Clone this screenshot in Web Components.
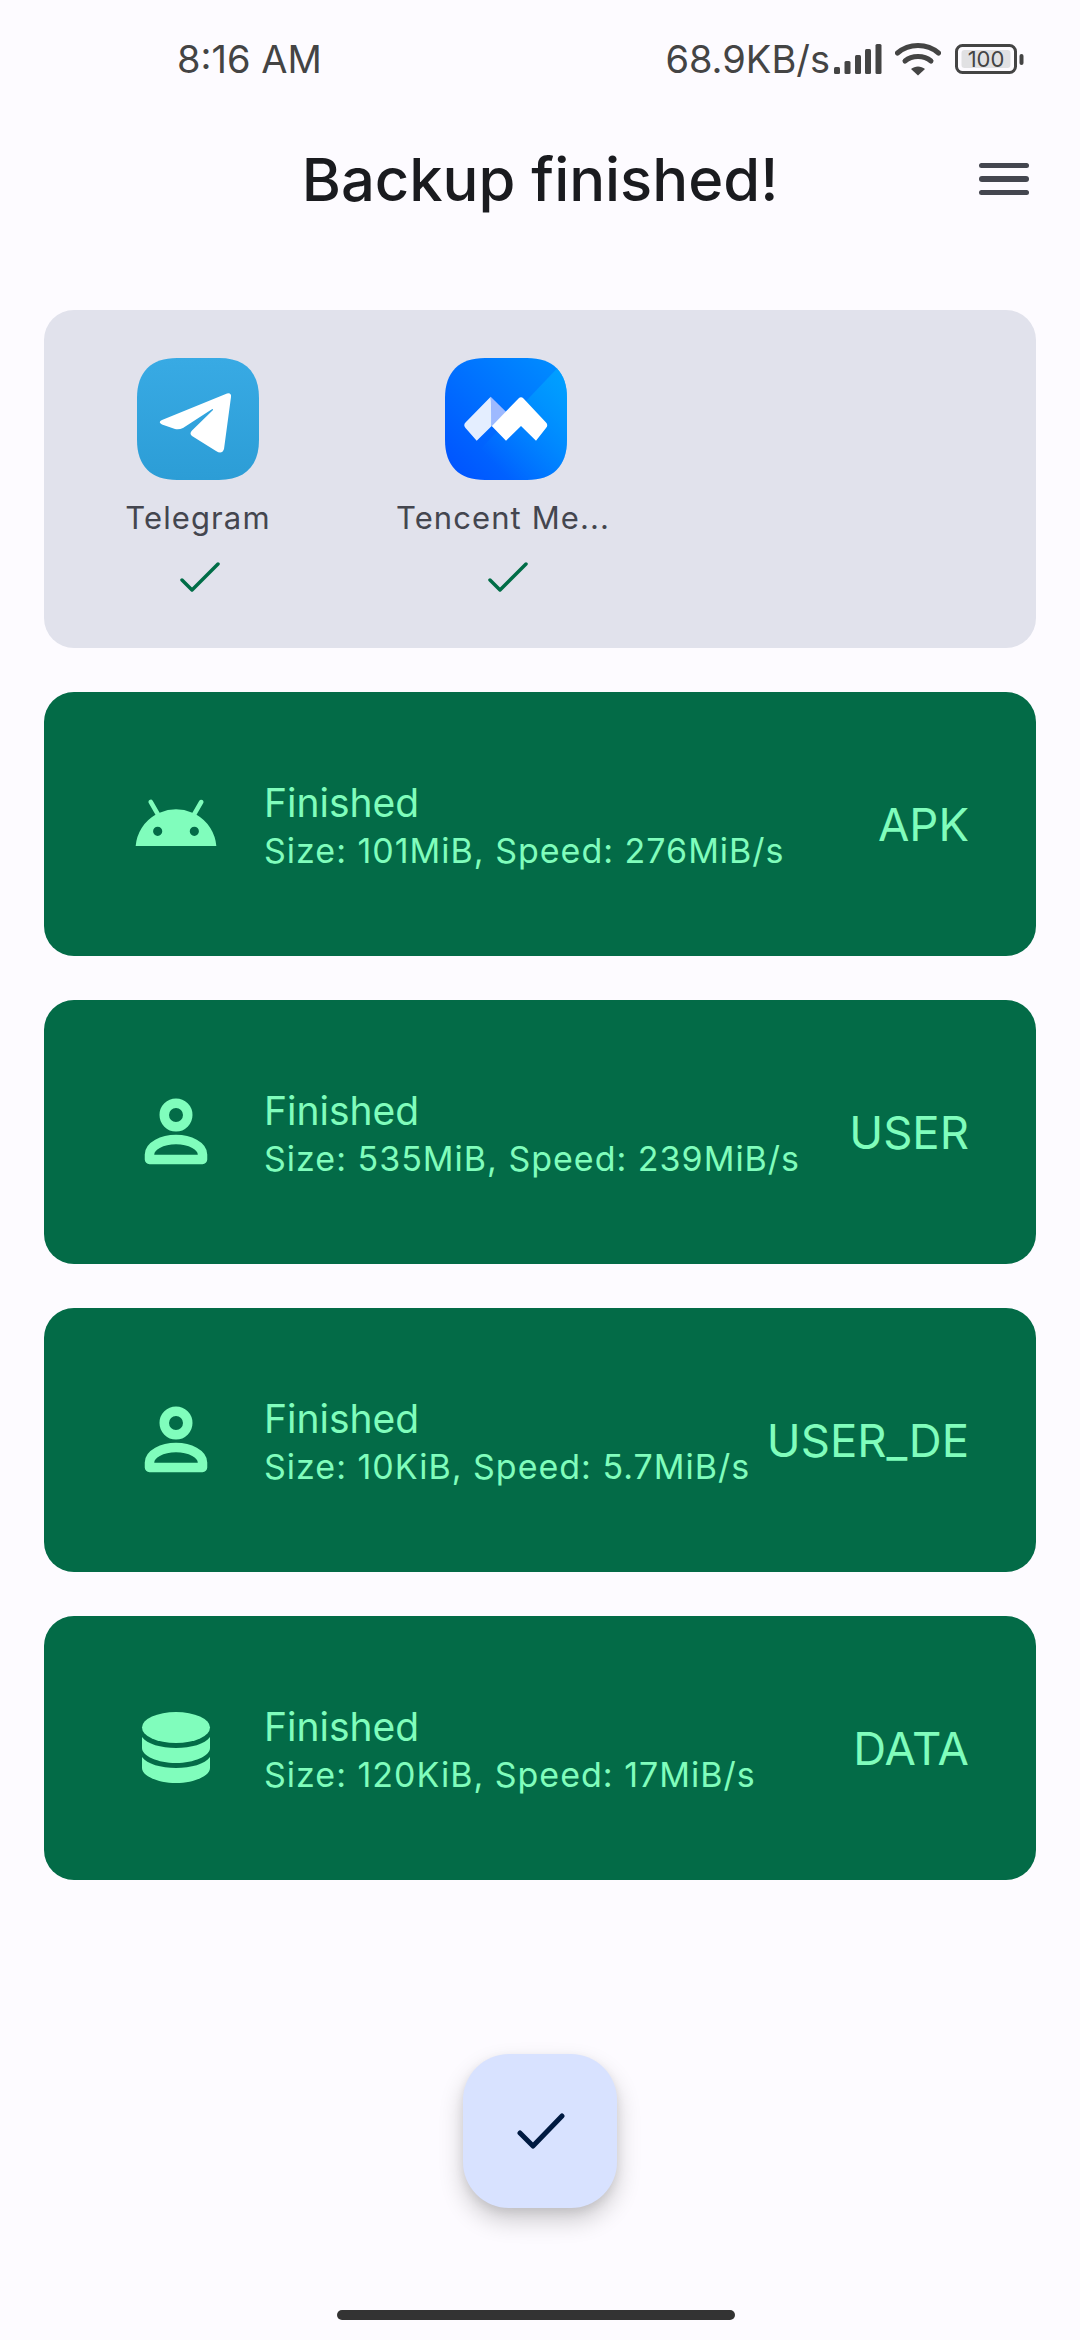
<!DOCTYPE html>
<html>
<head>
<meta charset="utf-8">
<style>
  html, body { margin: 0; padding: 0; background: #fdfbff; }
  body { font-family: Inter, Roboto, sans-serif; }
</style>
</head>
<body>
<app-screen>
  <status-bar></status-bar>
  <top-bar>Backup finished!</top-bar>
  <apps-card>
    <app-tile name="Telegram">
      <svg slot="icon" width="122" height="122" viewBox="0 0 122 122">
        <defs><linearGradient id="tg" x1="0" y1="0" x2="0" y2="1"><stop offset="0" stop-color="#38aae4"/><stop offset="1" stop-color="#2c9dd6"/></linearGradient></defs>
        <path d="M40 0H82C108 0 122 14 122 40V82C122 108 108 122 82 122H40C14 122 0 108 0 82V40C0 14 14 0 40 0Z" fill="url(#tg)"/>
        <path d="M90 35.500Q94.500 34.500 94 39L87 91Q85 97 79 93L55 78Q52 75.500 55 72.500L76 52Q76.500 50.500 74.500 51.500L46 70Q42 72 38 71L25 66.500Q20.500 64 25 62Z" fill="#fff"/>
      </svg>
    </app-tile>
    <app-tile name="Tencent Me..." shift>
      <svg slot="icon" width="122" height="122" viewBox="0 0 122 122">
        <defs>
          <linearGradient id="tm1" x1="0" y1="1" x2="1" y2="0"><stop offset="0" stop-color="#0050ff"/><stop offset="1" stop-color="#0090ff"/></linearGradient>
          <linearGradient id="tm2" x1="0" y1="1" x2="1" y2="0"><stop offset=".25" stop-color="#00a8ff" stop-opacity="0"/><stop offset="1" stop-color="#00a8ff" stop-opacity=".8"/></linearGradient>
          <clipPath id="tmc"><path d="M40 0H82C108 0 122 14 122 40V82C122 108 108 122 82 122H40C14 122 0 108 0 82V40C0 14 14 0 40 0Z"/></clipPath>
        </defs>
        <g clip-path="url(#tmc)">
          <rect width="122" height="122" fill="url(#tm1)"/>
          <path d="M122 0V122H6Z" fill="url(#tm2)"/>
        </g>
        <path d="M45.700 38.700L20.500 64.500Q18 67 20.500 70L31.700 82.700L46.700 68V53Z" fill="#e4eeff"/>
        <path d="M45.700 38.700L61 53.700L46.700 68Z" fill="#9db9ff"/>
        <path d="M73.500 40.500Q76 38 78.500 40.500L101 64.500Q103.500 67 101 70L91 82.700L76 68L61 82.700L46.700 68Z" fill="#fff"/>
      </svg>
    </app-tile>
  </apps-card>

  <task-card label="APK" status="Finished" detail="Size: 101MiB, Speed: 276MiB/s">
    <svg slot="icon" width="88" height="88" viewBox="0 0 24 24" fill="currentColor"><path d="M17.6 9.48l1.84-3.18c.16-.31.04-.69-.26-.85a.637.637 0 0 0-.83.22l-1.88 3.24a11.463 11.463 0 0 0-8.94 0L5.65 5.67a.643.643 0 0 0-.87-.2c-.28.18-.37.54-.22.83L6.4 9.48A10.78 10.78 0 0 0 1 18h22a10.78 10.78 0 0 0-5.4-8.52zM7 15.25a1.25 1.25 0 1 1 0-2.5 1.25 1.25 0 0 1 0 2.5zm10 0a1.25 1.25 0 1 1 0-2.5 1.25 1.25 0 0 1 0 2.5z"/></svg>
  </task-card>
  <task-card label="USER" status="Finished" detail="Size: 535MiB, Speed: 239MiB/s">
    <svg slot="icon" width="88" height="88" viewBox="0 0 88 88" fill="none" stroke="currentColor" stroke-width="9.500" stroke-linejoin="round"><circle cx="44" cy="27" r="11.750"/><path d="M17.500 71.500H70.500V66.500C70.500 58 58 51.500 44 51.500C30 51.500 17.500 58 17.500 66.500Z"/></svg>
  </task-card>
  <task-card label="USER_DE" status="Finished" detail="Size: 10KiB, Speed: 5.7MiB/s">
    <svg slot="icon" width="88" height="88" viewBox="0 0 88 88" fill="none" stroke="currentColor" stroke-width="9.500" stroke-linejoin="round"><circle cx="44" cy="27" r="11.750"/><path d="M17.500 71.500H70.500V66.500C70.500 58 58 51.500 44 51.500C30 51.500 17.500 58 17.500 66.500Z"/></svg>
  </task-card>
  <task-card label="DATA" status="Finished" detail="Size: 120KiB, Speed: 17MiB/s">
    <svg slot="icon" width="88" height="88" viewBox="0 0 88 88" fill="currentColor"><ellipse cx="44" cy="23.500" rx="34" ry="15.500"/><path d="M10 33C15 40 29 44 44 44C59 44 73 40 78 33V44C78 52 62 59 44 59C26 59 10 52 10 44Z"/><path d="M10 53C15 60 29 64 44 64C59 64 73 60 78 53V64C78 72 62 79 44 79C26 79 10 72 10 64Z"/></svg>
  </task-card>

  <fab-button></fab-button>
  <home-indicator></home-indicator>
</app-screen>

<script>
class AppScreen extends HTMLElement {
  constructor() {
    super();
    this.attachShadow({ mode: 'open' }).innerHTML = `
      <style>
        :host { display: flex; flex-direction: column; width: 1080px; height: 2340px; background: #fdfbff; overflow: hidden; }
        .list { display: flex; flex-direction: column; gap: 44px; padding: 0 44px; }
      </style>
      <slot name="top"></slot>
      <div class="list"><slot></slot></div>
      <slot name="bottom"></slot>`;
    this.querySelector('status-bar').slot = 'top';
    this.querySelector('top-bar').slot = 'top';
    this.querySelector('fab-button').slot = 'bottom';
    this.querySelector('home-indicator').slot = 'bottom';
  }
}

class StatusBar extends HTMLElement {
  constructor() {
    super();
    this.attachShadow({ mode: 'open' }).innerHTML = `
      <style>
        :host { display: flex; align-items: center; height: 118px; padding: 0 56px 0 177px; box-sizing: border-box; color: #444; font: 400 38px Inter, Roboto, sans-serif; }
        .right { margin-left: auto; display: flex; align-items: center; }
        .net { margin-right: 4px; }
        .signal { margin-right: 13px; }
        .wifi { margin-right: 14px; }
        .batt { position: relative; width: 69px; height: 30px; }
        .batt svg { display: block; }
        .batt span { position: absolute; left: 0; width: 62px; top: 0; line-height: 30px; text-align: center; font-size: 22px; }
      </style>
      <span>8:16 AM</span>
      <div class="right">
        <span class="net">68.9KB/s</span>
        <svg class="signal" width="48" height="30" viewBox="0 0 48 30" fill="#444">
          <rect x="0" y="23" width="6" height="7" rx="1.500"/><rect x="10.500" y="17" width="6" height="13" rx="1.500"/><rect x="21" y="11" width="6" height="19" rx="1.500"/><rect x="31" y="5" width="6" height="25" rx="1.500"/><rect x="41.500" y="0" width="6" height="30" rx="1.500"/>
        </svg>
        <svg class="wifi" width="46" height="34" viewBox="0 0 46 34" fill="none" stroke="#444" stroke-width="5" stroke-linecap="round">
          <path d="M2.500 11C14 1 32 1 43.500 11"/><path d="M10 19C17 13 29 13 36 19"/>
          <path d="M23 33.500L16 27C20 23.500 26 23.500 30 27Z" fill="#444" stroke="none"/>
        </svg>
        <div class="batt">
          <svg width="69" height="30" viewBox="0 0 69 30">
            <rect x="1.500" y="1.500" width="59" height="27" rx="6" fill="none" stroke="#444" stroke-width="3"/>
            <rect x="6.500" y="6" width="49" height="18" rx="3" fill="#e1e1e3"/>
            <rect x="64.500" y="10" width="4" height="11" rx="2" fill="#444"/>
          </svg>
          <span>100</span>
        </div>
      </div>`;
  }
}

class TopBar extends HTMLElement {
  constructor() {
    super();
    this.attachShadow({ mode: 'open' }).innerHTML = `
      <style>
        :host { display: grid; grid-template-columns: 1fr auto 1fr; align-items: center; height: 122px; margin-bottom: 70px; padding: 0 51px; box-sizing: border-box; }
        .title { grid-column: 2; font: 500 59.700px Inter, Roboto, sans-serif; color: #1a1b1f; }
        .menu { grid-column: 3; justify-self: end; display: flex; flex-direction: column; gap: 8.500px; }
        .menu i { display: block; width: 50px; height: 5.300px; border-radius: 3px; background: #44464f; }
      </style>
      <div class="title"><slot></slot></div>
      <div class="menu"><i></i><i></i><i></i></div>`;
  }
}

class AppsCard extends HTMLElement {
  constructor() {
    super();
    this.attachShadow({ mode: 'open' }).innerHTML = `
      <style>
        :host { display: grid; grid-template-columns: repeat(3, 308px); height: 338px; box-sizing: border-box; padding-top: 48px; background: #e1e2ec; border-radius: 30px; }
      </style>
      <slot></slot>`;
  }
}

class AppTile extends HTMLElement {
  constructor() {
    super();
    this.attachShadow({ mode: 'open' }).innerHTML = `
      <style>
        :host { display: flex; flex-direction: column; align-items: center; color: #44464f; }
        ::slotted(svg) { display: block; }
        .name { margin-top: 18px; font: 400 31px/40px Inter, Roboto, sans-serif; letter-spacing: 1.100px; white-space: nowrap; }
        :host([shift]) .name { margin-right: 6px; }
        .check { margin: 24px 0 0 3px; display: block; }
      </style>
      <slot name="icon"></slot>
      <div class="name"></div>
      <svg class="check" width="40" height="32" viewBox="0 0 40 32" fill="none" stroke="#006d47" stroke-width="3.500" stroke-linecap="round" stroke-linejoin="round"><path d="M2 18L12 28L38 2"/></svg>`;
    this.shadowRoot.querySelector('.name').textContent = this.getAttribute('name');
  }
}

class TaskCard extends HTMLElement {
  constructor() {
    super();
    this.attachShadow({ mode: 'open' }).innerHTML = `
      <style>
        :host { display: flex; align-items: center; height: 264px; box-sizing: border-box; padding: 0 67px 0 88px; background: #036b47; border-radius: 30px; color: #80fdbc; font-family: Inter, Roboto, sans-serif; }
        ::slotted(svg) { display: block; flex: none; }
        .text { margin-left: 44px; padding-top: 6px; }
        .status { font-size: 39px; line-height: 48px; }
        .detail { font-size: 34px; line-height: 48px; letter-spacing: 1px; white-space: nowrap; }
        .type { margin-left: auto; font-size: 45.500px; padding-top: 1px; }
      </style>
      <slot name="icon"></slot>
      <div class="text"><div class="status"></div><div class="detail"></div></div>
      <div class="type"></div>`;
    const root = this.shadowRoot;
    root.querySelector('.status').textContent = this.getAttribute('status');
    root.querySelector('.detail').textContent = this.getAttribute('detail');
    root.querySelector('.type').textContent = this.getAttribute('label');
  }
}

class FabButton extends HTMLElement {
  constructor() {
    super();
    this.attachShadow({ mode: 'open' }).innerHTML = `
      <style>
        :host { display: flex; align-items: center; justify-content: center; width: 154px; height: 154px; margin: 174px auto 0; background: #d8e2ff; border-radius: 46px; box-shadow: 0 12px 24px rgba(0,0,0,.2), 0 4px 10px rgba(0,0,0,.08); }
        svg { margin-left: 2px; }
      </style>
      <svg width="48" height="38" viewBox="0 0 48 38" fill="none" stroke="#001a41" stroke-width="5" stroke-linecap="round" stroke-linejoin="round"><path d="M3 21L16 34L45 4"/></svg>`;
  }
}

class HomeIndicator extends HTMLElement {
  constructor() {
    super();
    this.attachShadow({ mode: 'open' }).innerHTML = `
      <style>
        :host { display: block; width: 398px; height: 10px; margin: 102px 0 0 337px; border-radius: 5px; background: #333; }
      </style>`;
  }
}

customElements.define('status-bar', StatusBar);
customElements.define('top-bar', TopBar);
customElements.define('apps-card', AppsCard);
customElements.define('app-tile', AppTile);
customElements.define('task-card', TaskCard);
customElements.define('fab-button', FabButton);
customElements.define('home-indicator', HomeIndicator);
customElements.define('app-screen', AppScreen);
</script>
</body>
</html>
